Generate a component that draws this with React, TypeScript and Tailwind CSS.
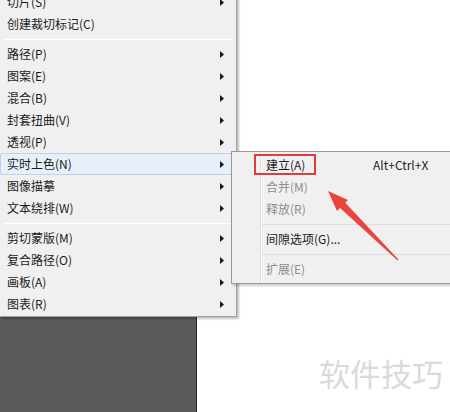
import React from 'react';

type Item = { label: string; arrow?: boolean } | 'sep';

const mainItems: Item[] = [
  { label: '切片(S)', arrow: true },
  { label: '创建裁切标记(C)' },
  'sep',
  { label: '路径(P)', arrow: true },
  { label: '图案(E)', arrow: true },
  { label: '混合(B)', arrow: true },
  { label: '封套扭曲(V)', arrow: true },
  { label: '透视(P)', arrow: true },
  { label: '实时上色(N)', arrow: true },
  { label: '图像描摹', arrow: true },
  { label: '文本绕排(W)', arrow: true },
  'sep',
  { label: '剪切蒙版(M)', arrow: true },
  { label: '复合路径(O)', arrow: true },
  { label: '画板(A)', arrow: true },
  { label: '图表(R)', arrow: true },
];

const font = { fontFamily: '"Noto Sans CJK SC", "Noto Sans", sans-serif' };

function Caret() {
  return (
    <svg width="4" height="7" viewBox="0 0 4 7" className="shrink-0">
      <path d="M0 0 L4 3.5 L0 7 Z" fill="#1a1a1a" />
    </svg>
  );
}

function MainMenu() {
  return (
    <div className="w-[237px] bg-[#f0f0f0] border-r border-b border-[#a0a0a0] shadow-[2px_2px_2px_rgba(0,0,0,0.25)] -mt-[9px] pb-[1px] relative z-10">
      {mainItems.map((it, i) =>
        it === 'sep' ? (
          <div key={i} className="h-[8px] flex items-center pl-[3px] pr-[3px]">
            <div className="w-full h-px bg-[#dcdcdc] border-b border-white" />
          </div>
        ) : (
          <div
            key={i}
            className={`h-[22px] flex items-center justify-between text-[12px] text-[#1b1b1b] ${
              it.label === '实时上色(N)'
                ? 'bg-[#e7eff9] border border-[#b9d0ee] rounded-[2px] pl-[6px] pr-[11px]'
                : 'pl-[7px] pr-[12px]'
            }`}
          >
            <span className="leading-none">{it.label}</span>
            {it.arrow && <Caret />}
          </div>
        )
      )}
    </div>
  );
}

function SubMenu() {
  const row = 'h-[22px] flex items-center text-[12px] leading-none';
  return (
    <div className="absolute left-[231px] top-[151px] w-[240px] bg-[#f0f0f0] border border-[#979797] pt-[2px] pb-[3px] shadow-[2px_2px_2px_rgba(0,0,0,0.2)] z-20">
      <div className="absolute left-[28px] top-0 bottom-0 w-[2px] border-l border-[#dcdcdc]">
        <div className="w-px h-full bg-white" />
      </div>
      <div className={`${row} relative`}>
        <div className="absolute left-[22px] top-0 w-[62px] h-[21px] border-2 border-[#e03c3f]" />
        <span className="pl-[34px] text-[#1b1b1b] w-[141px]">建立(A)</span>
        <span className="text-[#1b1b1b]">Alt+Ctrl+X</span>
      </div>
      <div className={row}>
        <span className="pl-[34px] text-[#8d8d8d]">合并(M)</span>
      </div>
      <div className={row}>
        <span className="pl-[34px] text-[#8d8d8d]">释放(R)</span>
      </div>
      <div className="h-[8px] flex items-center pl-[30px]">
        <div className="w-full h-px bg-[#dcdcdc]" />
      </div>
      <div className={row}>
        <span className="pl-[34px] text-[#1b1b1b]">间隙选项(G)...</span>
      </div>
      <div className="h-[8px] flex items-center pl-[30px]">
        <div className="w-full h-px bg-[#dcdcdc]" />
      </div>
      <div className={row}>
        <span className="pl-[34px] text-[#8d8d8d]">扩展(E)</span>
      </div>
    </div>
  );
}

function RedArrow() {
  return (
    <svg className="absolute left-0 top-0 z-30 pointer-events-none" width="450" height="412" viewBox="0 0 450 412">
      <polygon
        points="398.4,259.6 397.6,260.4 339.5,207.6 344.9,202.3"
        fill="#e8453c"
      />
      <polygon points="328,191 348,200 337,211" fill="#e8453c" />
    </svg>
  );
}

export default function App() {
  return (
    <div className="relative w-[450px] h-[412px] bg-white overflow-hidden" style={font}>
      <div className="flex flex-col h-full">
        <MainMenu />
        <div className="w-[197px] flex-1 bg-[#5a5a5a] border-r border-[#262626] -mt-[1px]" />
      </div>
      <SubMenu />
      <RedArrow />
      <div className="absolute left-[319px] top-[357px] text-[31px] leading-none text-[#dadada]">
        软件技巧
      </div>
    </div>
  );
}
